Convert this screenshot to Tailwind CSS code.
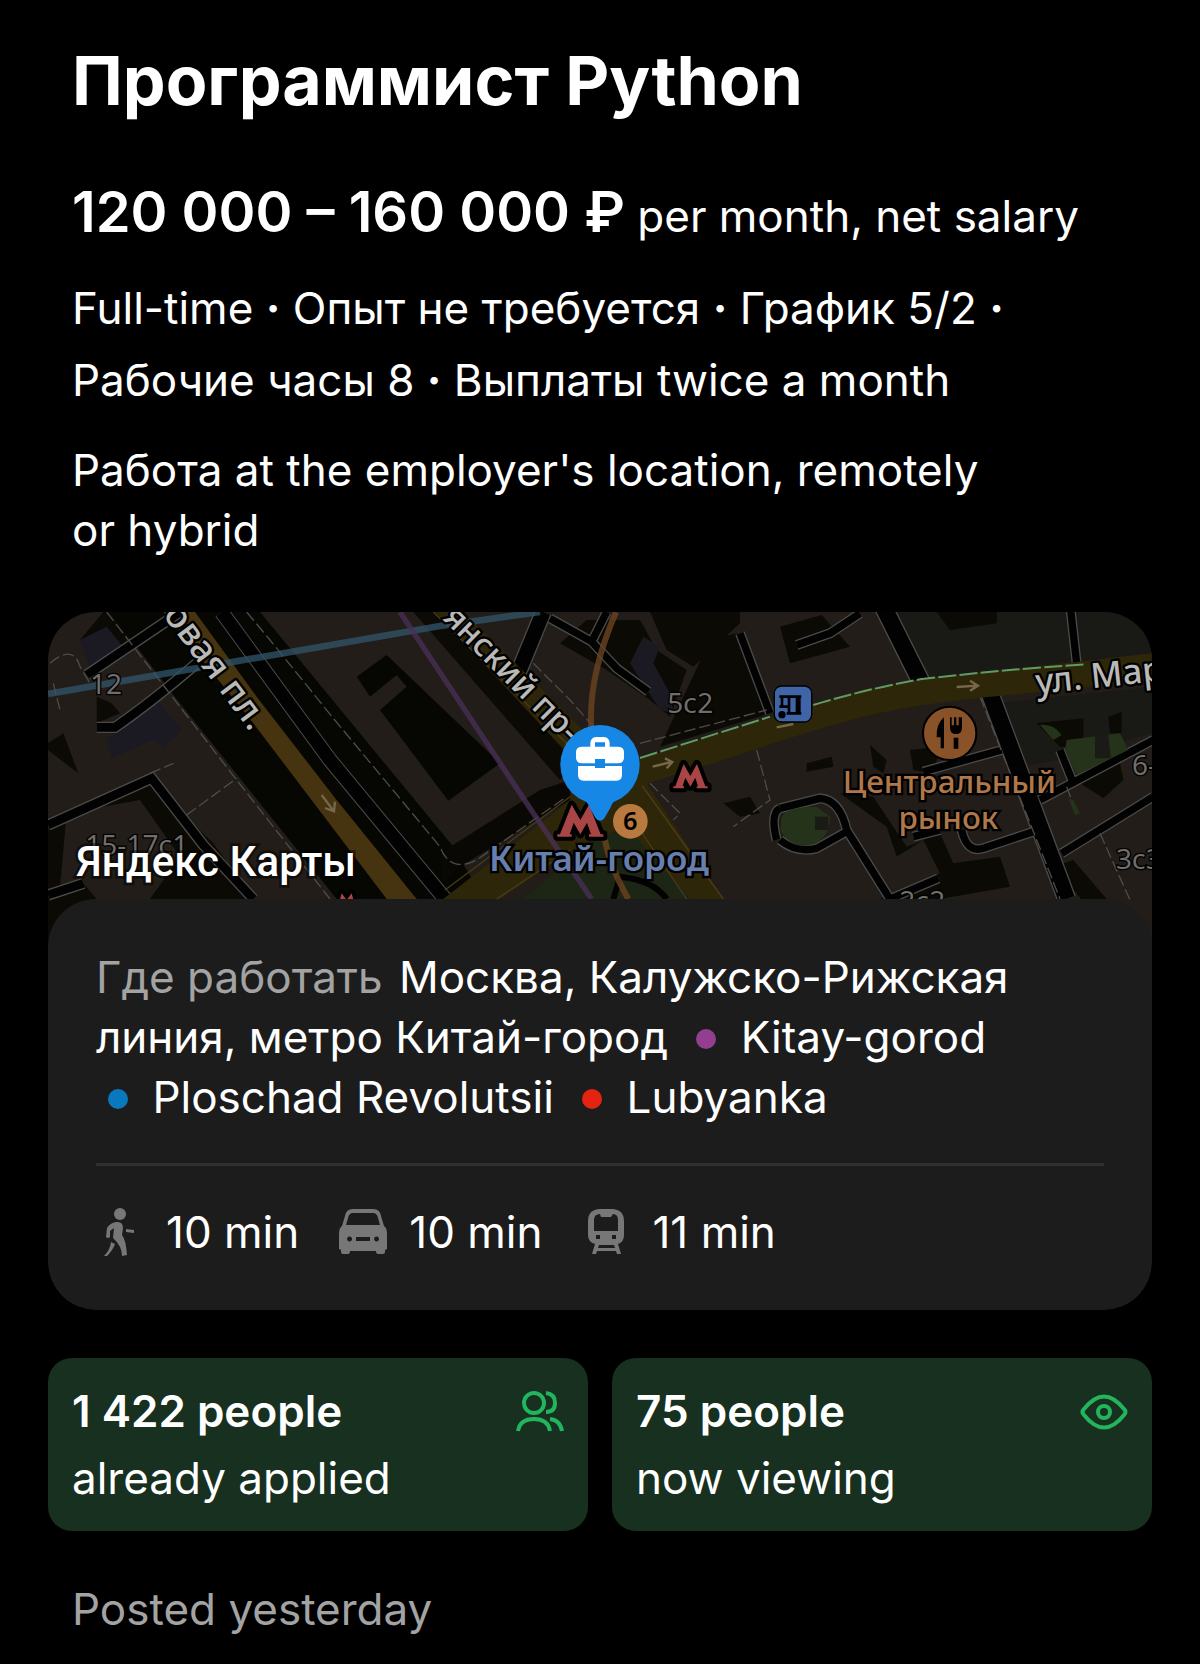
<!DOCTYPE html>
<html lang="ru">
  <head>
    <meta charset="UTF-8" />
    <meta name="viewport" content="width=device-width, initial-scale=1.0" />
    <title>Программист Python</title>
    <script src="https://cdn.jsdelivr.net/npm/@tailwindcss/browser@4"></script>
  </head>
  <body class="bg-black text-white font-[Inter,sans-serif] min-h-screen">
    <main class="px-12 pt-9 pb-6 text-[44px] leading-[60px]">
      <!-- Vacancy summary -->
      <section class="px-6">
        <h1 class="text-[68px] leading-[88px] font-bold">Программист Python</h1>
        <p class="mt-12 leading-[80px] whitespace-nowrap">
          <span class="text-[56px] font-semibold">120 000 – 160 000 ₽</span>
          per month, net salary
        </p>
        <p class="mt-4 leading-[72px]">
          Full-time <b>·</b> Опыт не требуется <b>·</b> График 5/2 <b>·</b><br />
          Рабочие часы 8 <b>·</b> Выплаты twice a month
        </p>
        <p class="mt-6">
          Работа at the employer's location, remotely<br />
          or hybrid
        </p>
      </section>

      <!-- Map with address card -->
      <section class="mt-[52px] rounded-[48px] overflow-hidden">
        <svg class="block w-full h-[340px]" viewBox="24 36 3312 1020" preserveAspectRatio="xMidYMin slice" role="img" aria-label="Яндекс Карты">
          <rect x="24" y="36" width="3312" height="1020" fill="#221d18" />

          <!-- yards and lots -->
          <g fill="#0c0a05">
            <path d="M190 36L380 36 270 150 120 120zM24 690L330 550 520 730 640 897 24 1056z" />
            <path d="M170 290L215 310 240 340 170 370zM24 430L70 400 115 520 24 450z" />
            <path d="M1120 36H1230L1640 450 1560 540zM1560 130L1640 60 1800 60 1850 150 1940 210 1890 350 1830 300 1700 210z" />
            <path d="M1830 36H2100V70L1960 200 1880 150zM2220 80L2345 45 2430 140 2250 190zM2010 120L2090 100 2190 340 1860 440z" />
            <path d="M2130 590L2050 610 2100 650 2160 640zM2610 450L2700 440 2680 520 2620 510zM2490 435L2540 480 2530 520 2500 500zM2300 490L2375 470 2380 500 2300 515z" />
            <path d="M2400 580L2500 590 2600 740 2700 700 2740 790 2880 770 2910 860 2700 897 2520 897 2700 820 2650 720 2570 770 2540 680z" />
            <path d="M3100 780L3040 800 3260 1056H3336zM3120 550L3240 490 3250 540 3190 595z" />
          </g>
          <path d="M40 200L100 170 150 310 80 340zM80 640L300 600 420 770 330 897 170 897 130 850 60 860z" fill="#221d18" />
          <path d="M2560 36H3250L3336 120V190L2680 240z" fill="#191915" />
          <path d="M2690 36H2870V70L2730 90z" fill="#0c0a05" />
          <path d="M2870 310L3336 260V400L3060 480 2940 500z" fill="#191916" />
          <path d="M120 120L200 80 245 135 150 205zM200 420L350 300 425 390 370 445 340 420 215 475zM1770 190L1810 110 1860 140 1840 190 1890 280 1900 340 1860 330z" fill="#1b1a22" />
          <path d="M2990 370L3130 355 3130 440 3060 440zM3205 350L3245 335V400H3210z" fill="#0c0a05" />

          <!-- boulevard on the left -->
          <path d="M210 36H660L1240 740 1330 897H890L420 310z" fill="#060603" />
          <path d="M950 230L1040 165 1380 490 1225 602 1020 330 1100 260 1070 225 990 290z" fill="#060603" />
          <path d="M1200 760L1500 570 1590 540 1590 600 1260 800 1210 850z" fill="#0a0804" />
          <path d="M370 36H465L650 290 890 600 1130 897H1040L640 370z" fill="#46330f" />
          <g fill="none" stroke="#4a4a48" stroke-width="46">
            <path d="M545 36L870 480 1215 897" />
            <path d="M140 225L420 36M170 382H225Q330 310 470 190M24 675L335 535 490 735 640 897M24 885L130 850" stroke-width="34" />
          </g>
          <g fill="none" stroke="#020202" stroke-width="40">
            <path d="M545 36L870 480 1215 897" />
            <path d="M140 225L420 36M170 382H225Q330 310 470 190M24 675L335 535 490 735 640 897M24 885L130 850" stroke-width="26" />
          </g>
          <g fill="none" stroke="#4d4c49" stroke-width="4" stroke-dasharray="34 12">
            <path d="M200 36L590 540 870 897M620 36L690 120 880 355 1200 740Q1230 820 1310 780L1580 590M440 645L590 535M330 520L400 490M30 190Q100 130 120 200L150 250M40 250L60 330" />
          </g>

          <!-- side streets on the right -->
          <g fill="none" stroke="#4a4a48" stroke-linejoin="round">
            <path d="M2530 20L2645 250M2850 280L3080 897" stroke-width="58" />
            <path d="M1510 36L1430 230" stroke-width="52" />
            <path d="M1530 55L1655 125 1730 205 1825 275M1655 125L1700 36M2100 100L2190 340M2270 135L2370 100 2460 40M3092 30L3110 190M2220 625L2340 595Q2400 600 2420 690L2550 897 2695 835M2220 720Q2270 760 2330 745L2420 695M2650 515L2885 450M3000 600L3340 420M3065 760L3340 590M2620 710L2700 690M2765 690Q2780 760 2830 745L2980 695M3060 450L3100 550M2220 625Q2190 640 2210 720" stroke-width="30" />
          </g>
          <g fill="none" stroke="#020202" stroke-linejoin="round">
            <path d="M2530 20L2645 250M2850 280L3080 897" stroke-width="50" />
            <path d="M1510 36L1430 230" stroke-width="44" />
            <path d="M1530 55L1655 125 1730 205 1825 275M1655 125L1700 36M2100 100L2190 340M2270 135L2370 100 2460 40M3092 30L3110 190M2220 625L2340 595Q2400 600 2420 690L2550 897 2695 835M2220 720Q2270 760 2330 745L2420 695M2650 515L2885 450M3000 600L3340 420M3065 760L3340 590M2620 710L2700 690M2765 690Q2780 760 2830 745L2980 695M3060 450L3100 550M2220 625Q2190 640 2210 720" stroke-width="22" />
          </g>
          <path d="M1830 550L1920 640 1900 660M2150 450L2190 600 2080 680M2820 290L3060 897M3180 700L3270 900M3080 560L3110 640M1480 190L1590 300 1660 380M1800 430L2180 330" fill="none" stroke="#4d4c49" stroke-width="4" stroke-dasharray="34 12" />

          <!-- parks -->
          <path d="M1700 700L1820 690 1960 897H1450L1590 780z" fill="#1d2614" />
          <path d="M2225 650Q2240 620 2330 620L2370 650Q2370 730 2290 738 2240 730 2222 690zM3080 420L3240 400 3265 450 3110 525 3075 450zM3000 375Q3040 370 3065 405L3040 420zM3085 595L3100 600 3120 640 3105 645z" fill="#25331a" />
          <path d="M2325 650H2365V690H2325zM3165 405H3205L3212 475H3165z" fill="#1a1a17" />
          <path d="M1720 897L1740 830Q1840 840 1880 897" fill="none" stroke="#020202" stroke-width="18" />

          <!-- main roads -->
          <path d="M1185 36H1270L1680 440 1820 550 2050 897H1950L1760 680 1610 740 1380 897H1210L1590 600 1610 490z" fill="#2e2609" />
          <path d="M1180 36L1590 440M1215 870L1590 590M1370 897L1590 750M1940 897L1800 690M2050 897L1805 555" fill="none" stroke="#4a3c17" stroke-width="4" />
          <path d="M1730 545L1810 513 2000 455C2180 395 2300 355 2460 312 2720 250 2950 250 3340 198" fill="none" stroke="#2e2609" stroke-width="78" />
          <path d="M1800 474L2190 350M2320 315C2420 285 2520 260 2640 238 2840 215 2950 205 3140 193" fill="none" stroke="#5f9a68" stroke-width="6" stroke-dasharray="54 10" />
          <path d="M1080 860L1130 897H1080z" fill="#46330f" />

          <!-- metro lines -->
          <g fill="none">
            <path d="M24 282L1200 78 1500 36" stroke="#32566b" stroke-opacity="0.75" stroke-width="20" />
            <path d="M1080 36L1480 640 1655 897" stroke="#4a3058" stroke-opacity="0.75" stroke-width="16" />
            <path d="M1728 36Q1640 240 1655 400M1695 720Q1710 800 1765 897" stroke="#6b4421" stroke-opacity="0.8" stroke-width="18" />
          </g>

          <!-- direction arrows -->
          <path d="M845 585L880 632M885 605L882 634 855 624M1838 500L1894 486M1875 475L1897 486 1880 505M2750 261L2812 257M2790 242L2814 257 2790 272M2210 382L2260 372" fill="none" stroke="#77684a" stroke-width="7" />

          <!-- house numbers and street names -->
          <g fill="#6f6e6b" stroke="#000" stroke-width="8" paint-order="stroke" font-family="'Noto Sans', sans-serif" font-size="84">
            <text x="150" y="281">12</text>
            <text x="136" y="766">15-17с1</text>
            <text x="1882" y="338">5с2</text>
            <text x="3276" y="524">6-8</text>
            <text x="3228" y="808">3с3</text>
            <text x="2578" y="932">2с2</text>
          </g>
          <g fill="#b9b9b7" stroke="#000" stroke-width="14" paint-order="stroke" stroke-linejoin="round" font-family="'Noto Sans', sans-serif" font-weight="500">
            <text transform="translate(367 45) rotate(53)" font-size="108">овая пл.</text>
            <text transform="translate(1205 56) rotate(45)" font-size="99">янский пр-</text>
            <text transform="translate(2990 282) rotate(-6)" font-size="104">ул. Марос</text>
          </g>
          <g fill="#b0784a" stroke="#000" stroke-width="14" paint-order="stroke" text-anchor="middle" font-family="'Noto Sans', sans-serif" font-weight="500" font-size="94">
            <text x="2728" y="580">Центральный</text>
            <text x="2725" y="688">рынок</text>
          </g>

          <!-- market -->
          <circle cx="2729" cy="400" r="80" fill="#8a5228" stroke="#000" stroke-width="6" />
          <path d="M2712 352V445H2702V412H2690Q2688 372 2712 352zM2730 352H2735V376H2742V352H2749V376H2756V352H2766V382Q2766 400 2753 402H2743Q2730 400 2730 382zM2741 413H2755V446H2741z" fill="#000" />

          <!-- tram stop -->
          <rect x="2203" y="258" width="112" height="108" rx="22" fill="#3f64a8" stroke="#000" stroke-width="4" />
          <path d="M2218 290H2284M2226 290V322M2218 320H2250M2247 290V342M2271 290V342M2240 340H2284M2278 290V342" fill="none" stroke="#000" stroke-width="8" />
          <circle cx="2226" cy="344" r="11" fill="#000" />

          <!-- metro entrances -->
          <g fill="#a94545" stroke="#000" stroke-width="24" stroke-linejoin="round" paint-order="stroke">
            <path d="M1552 710V703H1560L1595 614 1621 660 1647 614 1682 703H1690V710H1647V703H1653L1641 668 1621 703 1601 668 1589 703H1595V710z" />
            <path d="M1900 565V559H1906L1931 492 1951 528 1971 492 1996 559H2003V565H1970V559H1974L1966 533 1951 560 1936 533 1928 559H1932V565z" />
            <path d="M890 935L905 880 920 900 935 880 950 935z" />
          </g>
          <circle cx="1771" cy="664" r="52" fill="#b87a3f" />
          <text x="1771" y="690" text-anchor="middle" font-family="'Noto Sans', sans-serif" font-weight="600" font-size="76" fill="#000">6</text>
          <text x="1677" y="812" text-anchor="middle" font-family="'Noto Sans', sans-serif" font-weight="600" font-size="105" fill="#687fae" stroke="#000" stroke-width="14" paint-order="stroke">Китай-город</text>

          <!-- workplace pin -->
          <circle cx="1680" cy="494" r="119" fill="#1787e6" />
          <path d="M1612 588Q1642 600 1648 622L1667 655Q1680 670 1693 655L1712 622Q1718 600 1748 588z" fill="#1787e6" />
          <path d="M1651 440V428Q1653 411 1670 411H1690Q1707 411 1709 428V440H1735Q1752 441 1752 456V475Q1750 490 1735 490H1695V477H1665V490H1625Q1610 490 1608 475V456Q1608 441 1625 440zM1665 440H1695V427H1665zM1614 498H1665V504H1695V498H1746V526Q1745 542 1730 542H1630Q1615 542 1614 526z" fill="#fff" fill-rule="evenodd" />

          <text x="108" y="828" font-family="Roboto, sans-serif" font-weight="500" font-size="126" fill="#fff" stroke="#000" stroke-width="16" stroke-opacity="0.5" paint-order="stroke">Яндекс Карты</text>
        </svg>

        <div class="relative -mt-[53px] rounded-[48px] bg-[#1c1c1c] px-12 pt-12 pb-12">
          <p>
            <span class="text-[#a3a3a3] mr-1">Где работать</span>
            Москва, Калужско-Рижская<br />
            линия, метро Китай-город
            <span class="inline-block size-5 rounded-full bg-[#943e90] ml-4 mr-3 align-[4px]"></span>
            Kitay-gorod<br />
            <span class="inline-block size-5 rounded-full bg-[#0a78be] ml-3 mr-3 align-[4px]"></span>
            Ploschad Revolutsii
            <span class="inline-block size-5 rounded-full bg-[#e42313] ml-4 mr-3 align-[4px]"></span>
            Lubyanka
          </p>
          <hr class="mt-9 border-0 h-[3px] bg-[#303030]" />
          <ul class="mt-9 flex gap-10">
            <li class="flex items-center gap-[22px]">
              <svg class="size-12" viewBox="0 0 48 48" fill="#777">
                <circle cx="24" cy="6" r="6" />
                <path d="M20 14Q27 13 27 20L26 27Q30 32 31 47L26 48Q26 38 17 30L18 20 14 23V29Q12 31 10 29L11 20Q14 15 20 14zM30 21L38 22V25L30 24zM15 34L19 36Q17 42 11 48H8Q14 42 15 34z" />
              </svg>
              10 min
            </li>
            <li class="flex items-center gap-[22px]">
              <svg class="size-12" viewBox="0 0 48 48" fill="#777">
                <path fill-rule="evenodd" d="M14 1H34Q41 1 42 8L45 18Q48 20 48 26V41L46 42V44Q46 46 44 46H39Q37 46 37 43H11Q11 46 9 46H4Q2 46 2 44V42L0 41V26Q0 20 3 18L6 8Q7 1 14 1zM14 5Q10 5 9 10L7 17H41L39 10Q38 5 34 5zM17 29V33H31V29zM10.500 28.500A2.500 2.500 0 1 0 10.600 28.500zM37.500 28.500A2.500 2.500 0 1 0 37.600 28.500z" />
              </svg>
              10 min
            </li>
            <li class="flex items-center gap-[22px]">
              <svg class="size-12" viewBox="0 0 48 48" fill="#777">
                <path fill-rule="evenodd" d="M17 1H31Q42 2 42 13V27Q42 34 36 36L39 46H35L34 43H15L14 46H10L13 36Q6 34 6 27V13Q6 2 17 1zM18 6Q12 6 12 12V23H36V12Q36 6 31 6L29 9H19zM14 27V31H18V27zM30 27V31H34V27zM17 37L16 40H33L32 37z" />
              </svg>
              11 min
            </li>
          </ul>
        </div>
      </section>

      <!-- Activity -->
      <section class="mt-12 grid grid-cols-2 gap-6">
        <div class="rounded-3xl bg-[#17301f] px-6 pt-5 pb-[19px] leading-[67px]">
          <div class="flex items-center justify-between">
            <b class="font-semibold">1 422 people</b>
            <svg class="size-12" viewBox="0 0 48 48" fill="none" stroke="#23b55d" stroke-width="4">
              <circle cx="18" cy="15" r="10" />
              <path d="M30 5Q39 6 39 15T30 24M2 43Q4 31 18 31T34 43M34 31Q44 32 46 43" />
            </svg>
          </div>
          <div>already applied</div>
        </div>
        <div class="rounded-3xl bg-[#17301f] px-6 pt-5 pb-[19px] leading-[67px]">
          <div class="flex items-center justify-between">
            <b class="font-semibold">75 people</b>
            <svg class="size-12" viewBox="0 0 48 48" fill="none" stroke="#23b55d" stroke-width="4">
              <path d="M4 21Q24 -4 44 21Q47 24 44 27Q24 52 4 27Q1 24 4 21z" />
              <circle cx="24" cy="24" r="6" />
            </svg>
          </div>
          <div>now viewing</div>
        </div>
      </section>

      <p class="mt-12 px-6 text-[#a3a3a3]">Posted yesterday</p>
    </main>
  </body>
</html>
